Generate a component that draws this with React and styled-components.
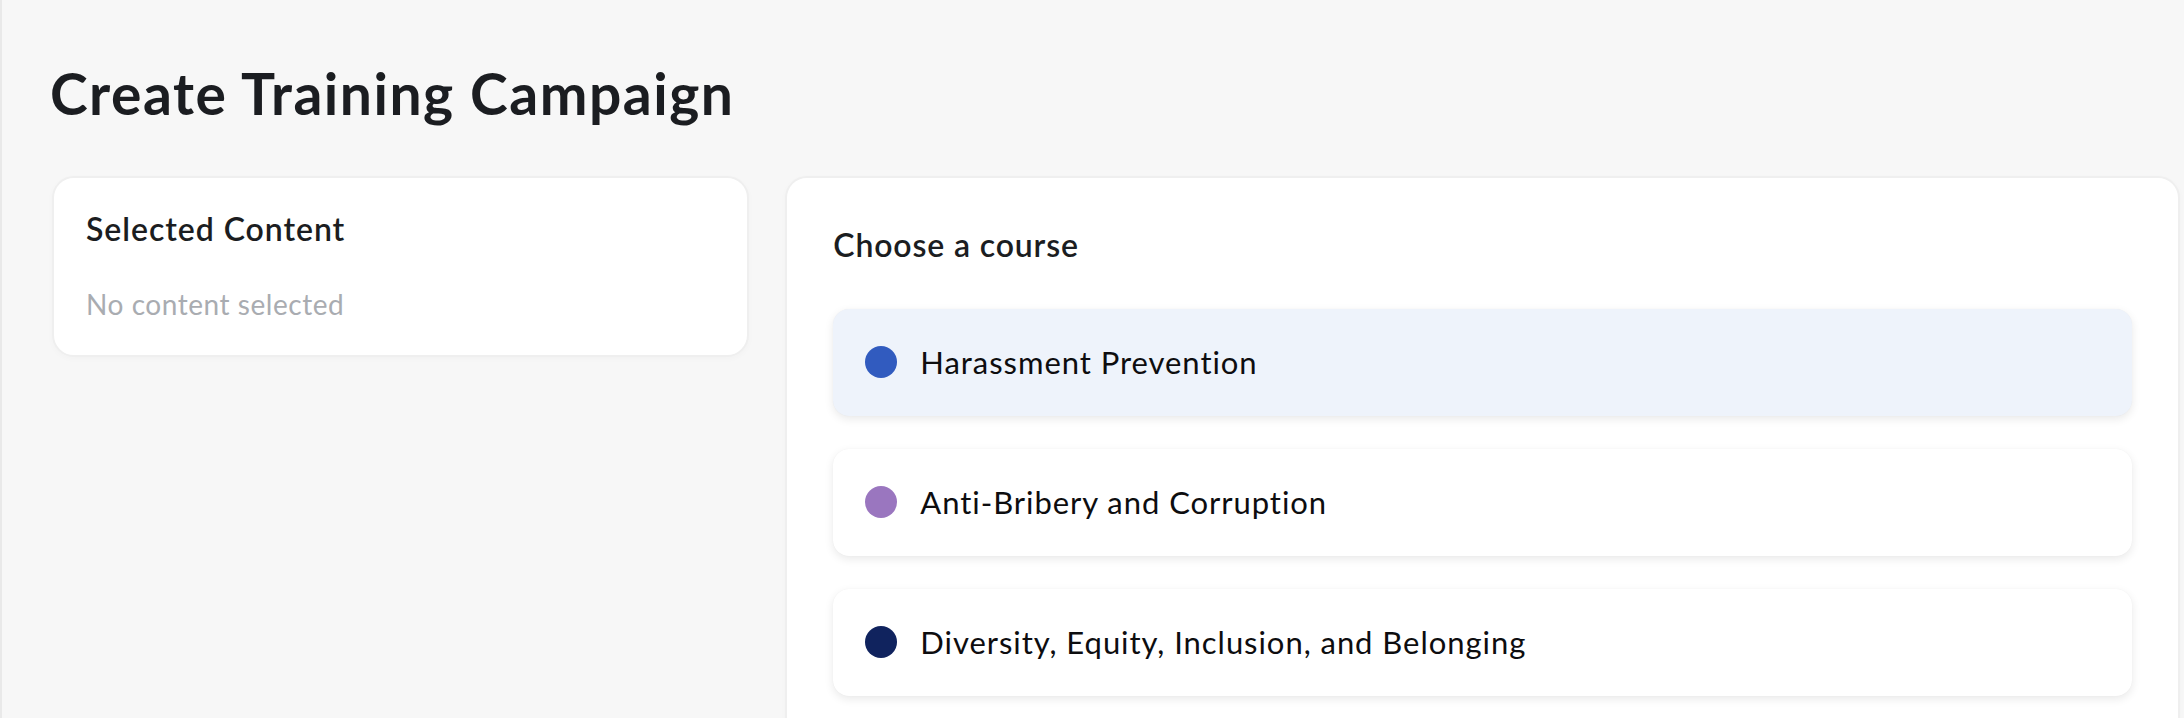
import React from "react";
import styled, { createGlobalStyle } from "styled-components";

const GlobalStyle = createGlobalStyle`
  html, body {
    margin: 0;
    padding: 0;
    background: #f7f7f7;
  }
  body {
    font-family: Lato, "Noto Sans", "Liberation Sans", sans-serif;
    color: #1b1d21;
    -webkit-font-smoothing: antialiased;
  }
  * { box-sizing: border-box; }
`;

const Page = styled.div`
  min-height: 718px;
  border-left: 2px solid #e9e9e9;
  padding: 60px 4px 0 50px;
  overflow: hidden;
`;

const Title = styled.h1`
  margin: 0 0 49px -2px;
  font-size: 57px;
  line-height: 1.18;
  font-weight: 700;
  color: #1b1d21;
  letter-spacing: 1.5px;
`;

const Columns = styled.div`
  display: grid;
  grid-template-columns: 1fr 2fr;
  gap: 36px;
  align-items: start;
`;

const Card = styled.section`
  background: #ffffff;
  border: 2px solid #efefef;
  border-radius: 22px;
  box-shadow: 0 2px 6px rgba(0, 0, 0, 0.025);
  padding: ${(p) => p.$padding};
`;

const CardTitle = styled.h2`
  margin: 0 0 ${(p) => p.$gap}px;
  font-size: 32px;
  line-height: 1.2;
  font-weight: 600;
  letter-spacing: ${(p) => p.$spacing}px;
  color: #1b1d21;
`;

const Placeholder = styled.p`
  margin: 0;
  font-size: 28px;
  line-height: 1.2;
  letter-spacing: 0.55px;
  color: #a9acb1;
`;

const CourseList = styled.div`
  display: flex;
  flex-direction: column;
  gap: 33px;
`;

const CourseItem = styled.button`
  display: flex;
  align-items: center;
  gap: 23px;
  width: 100%;
  height: 107px;
  padding: 0 32px;
  border: none;
  border-radius: 16px;
  background: ${(p) => (p.$selected ? "#eef3fb" : "#ffffff")};
  box-shadow: 0 3px 10px rgba(0, 0, 0, 0.09), 0 0 1px rgba(0, 0, 0, 0.06);
  font-family: inherit;
  text-align: left;
  cursor: pointer;
`;

const Dot = styled.span`
  flex: none;
  width: 32px;
  height: 32px;
  border-radius: 50%;
  background: ${(p) => p.$color};
`;

const CourseName = styled.span`
  font-size: 31px;
  font-weight: 400;
  letter-spacing: 0.95px;
  color: #0d0d0f;
`;

const courses = [
  { name: "Harassment Prevention", color: "#315bbf", selected: true },
  { name: "Anti-Bribery and Corruption", color: "#9a76bf" },
  { name: "Diversity, Equity, Inclusion, and Belonging", color: "#10235e" },
];

export default function App() {
  return (
    <>
      <GlobalStyle />
      <Page>
        <Title>Create Training Campaign</Title>
        <Columns>
          <Card $padding="32px 32px 34px">
            <CardTitle $gap={39} $spacing={0.95}>Selected Content</CardTitle>
            <Placeholder>No content selected</Placeholder>
          </Card>
          <Card $padding="48px 46px 48px">
            <CardTitle $gap={44} $spacing={0.85}>Choose a course</CardTitle>
            <CourseList>
              {courses.map((c) => (
                <CourseItem key={c.name} $selected={c.selected}>
                  <Dot $color={c.color} />
                  <CourseName>{c.name}</CourseName>
                </CourseItem>
              ))}
            </CourseList>
          </Card>
        </Columns>
      </Page>
    </>
  );
}
